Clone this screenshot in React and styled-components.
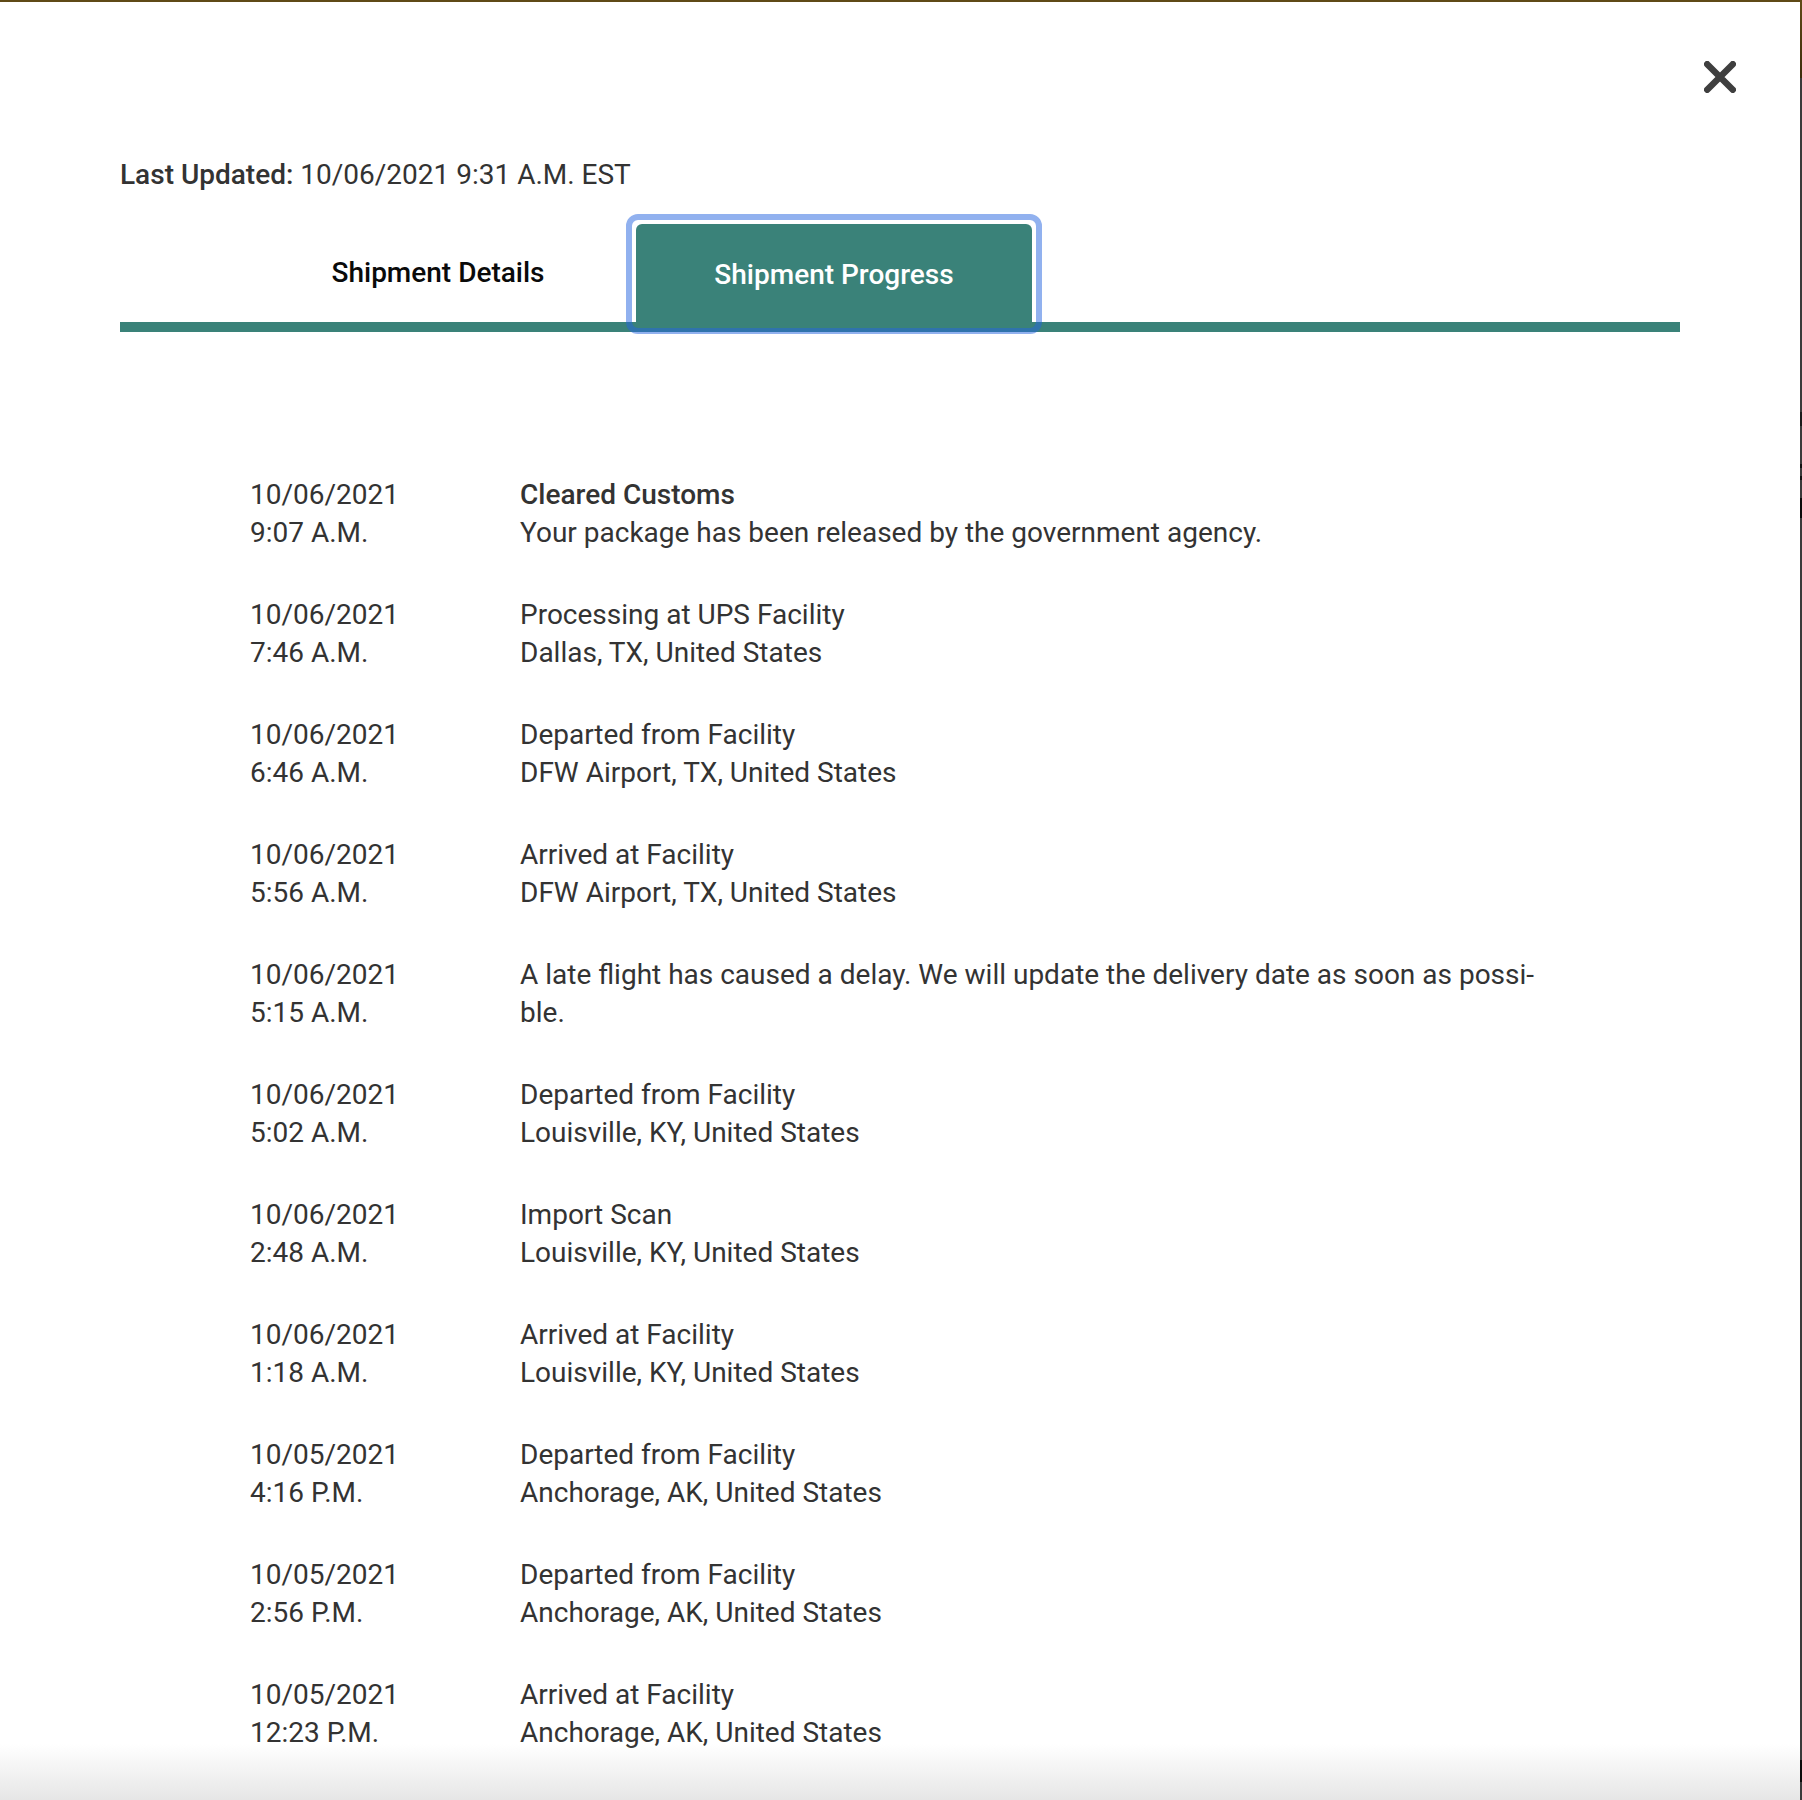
import React from 'react';
import styled, { createGlobalStyle } from 'styled-components';

const GlobalStyle = createGlobalStyle`
  html, body {
    margin: 0;
    padding: 0;
    background: #fff;
  }
  body {
    font-family: Roboto, "Liberation Sans", sans-serif;
    color: #333;
  }
`;

const Screen = styled.div`
  width: 1802px;
  height: 1800px;
  display: flex;
  flex-direction: column;
  overflow: hidden;
`;

const TopEdge = styled.div`
  height: 2px;
  flex: none;
  background: #5f4a17;
`;

const Body = styled.div`
  flex: 1;
  min-height: 0;
  display: flex;
`;

const Modal = styled.div`
  flex: 1;
  min-width: 0;
  position: relative;
  overflow: hidden;
  background: #fff;
  padding: 0 120px;
`;

const RightEdge = styled.div`
  width: 2px;
  flex: none;
  background: linear-gradient(
    to bottom,
    #5f4a17 0,
    #3d2d0c 76px,
    #3a3a3a 76px,
    #3a3a3a 410px,
    #1a1a1a 410px,
    #1a1a1a 424px,
    #3a3a3a 424px,
    #3a3a3a 462px,
    #111 462px,
    #111 466px,
    #3a3a3a 466px,
    #3a3a3a 474px,
    #111 474px,
    #111 478px,
    #3a3a3a 478px,
    #3a3a3a 496px,
    #0a0a0a 496px,
    #0a0a0a 516px,
    #3a3a3a 516px,
    #3a3a3a 1758px,
    #0a0a0a 1758px,
    #0a0a0a 1780px,
    #3a3a3a 1780px
  );
`;

const CloseRow = styled.div`
  display: flex;
  justify-content: flex-end;
  margin-right: -56px;
  padding-top: 59px;
`;

const CloseButton = styled.button`
  width: 32px;
  height: 32px;
  padding: 0;
  border: 0;
  background: none;
  color: #3f3f3f;
  display: block;
  cursor: pointer;
`;

const LastUpdated = styled.p`
  margin: 63px 0 0;
  font-size: 28px;
  line-height: 38px;
  color: #333;
`;

const Label = styled.strong`
  font-weight: 500;
`;

const TabBar = styled.div`
  display: flex;
  margin-top: 30px;
  padding-left: 120px;
  height: 98px;
  border-bottom: 10px solid #3a8279;
`;

const Tab = styled.button`
  position: relative;
  width: 396px;
  height: ${({ $active }) => ($active ? '108px' : '98px')};
  padding: ${({ $active }) => ($active ? '0 0 7px' : '0')};
  border: 0;
  border-radius: 6px 6px 0 0;
  background: ${({ $active }) => ($active ? '#3a8279' : 'transparent')};
  color: ${({ $active }) => ($active ? '#fff' : '#0a0a0a')};
  font-family: inherit;
  font-size: 28px;
  font-weight: 500;
  line-height: 38px;
  cursor: pointer;
`;

const FocusRing = styled.span`
  position: absolute;
  left: -10px;
  right: -10px;
  top: -10px;
  bottom: -2px;
  border: 6px solid rgba(36, 100, 224, 0.5);
  border-radius: 12px;
  pointer-events: none;
`;

const Events = styled.div`
  margin-top: 144px;
  padding-left: 130px;
  display: flex;
  flex-direction: column;
  gap: 44px;
`;

const EventRow = styled.div`
  display: grid;
  grid-template-columns: 270px 1fr;
  font-size: 28px;
  line-height: 38px;
  color: #333;
`;

const Line = styled.div`
  font-weight: ${({ $strong }) => ($strong ? 500 : 400)};
  white-space: nowrap;
`;

const BottomFade = styled.div`
  position: absolute;
  left: 0;
  right: 0;
  bottom: 0;
  height: 56px;
  background: linear-gradient(to bottom, rgba(230, 230, 230, 0), #e6e6e6);
  pointer-events: none;
`;

const events = [
  { date: '10/06/2021', time: '9:07 A.M.', title: 'Cleared Customs', detail: 'Your package has been released by the government agency.', strong: true },
  { date: '10/06/2021', time: '7:46 A.M.', title: 'Processing at UPS Facility', detail: 'Dallas, TX, United States' },
  { date: '10/06/2021', time: '6:46 A.M.', title: 'Departed from Facility', detail: 'DFW Airport, TX, United States' },
  { date: '10/06/2021', time: '5:56 A.M.', title: 'Arrived at Facility', detail: 'DFW Airport, TX, United States' },
  { date: '10/06/2021', time: '5:15 A.M.', title: 'A late flight has caused a delay. We will update the delivery date as soon as possi-', detail: 'ble.' },
  { date: '10/06/2021', time: '5:02 A.M.', title: 'Departed from Facility', detail: 'Louisville, KY, United States' },
  { date: '10/06/2021', time: '2:48 A.M.', title: 'Import Scan', detail: 'Louisville, KY, United States' },
  { date: '10/06/2021', time: '1:18 A.M.', title: 'Arrived at Facility', detail: 'Louisville, KY, United States' },
  { date: '10/05/2021', time: '4:16 P.M.', title: 'Departed from Facility', detail: 'Anchorage, AK, United States' },
  { date: '10/05/2021', time: '2:56 P.M.', title: 'Departed from Facility', detail: 'Anchorage, AK, United States' },
  { date: '10/05/2021', time: '12:23 P.M.', title: 'Arrived at Facility', detail: 'Anchorage, AK, United States' },
];

const CloseIcon = () => (
  <svg width="32" height="32" viewBox="0 0 32 32" fill="none" stroke="currentColor" strokeWidth="6.5" strokeLinecap="round">
    <path d="M3.2 3.2 L28.8 28.8 M28.8 3.2 L3.2 28.8" />
  </svg>
);

export default function App() {
  return (
    <Screen>
      <GlobalStyle />
      <TopEdge />
      <Body>
        <Modal>
          <CloseRow>
            <CloseButton aria-label="Close">
              <CloseIcon />
            </CloseButton>
          </CloseRow>
          <LastUpdated>
            <Label>Last Updated:</Label> 10/06/2021 9:31 A.M. EST
          </LastUpdated>
          <TabBar>
            <Tab>Shipment Details</Tab>
            <Tab $active>
              Shipment Progress
              <FocusRing />
            </Tab>
          </TabBar>
          <Events>
            {events.map((event) => (
              <EventRow key={event.date + event.time}>
                <div>
                  <Line>{event.date}</Line>
                  <Line>{event.time}</Line>
                </div>
                <div>
                  <Line $strong={event.strong}>{event.title}</Line>
                  <Line>{event.detail}</Line>
                </div>
              </EventRow>
            ))}
          </Events>
          <BottomFade />
        </Modal>
        <RightEdge />
      </Body>
    </Screen>
  );
}
